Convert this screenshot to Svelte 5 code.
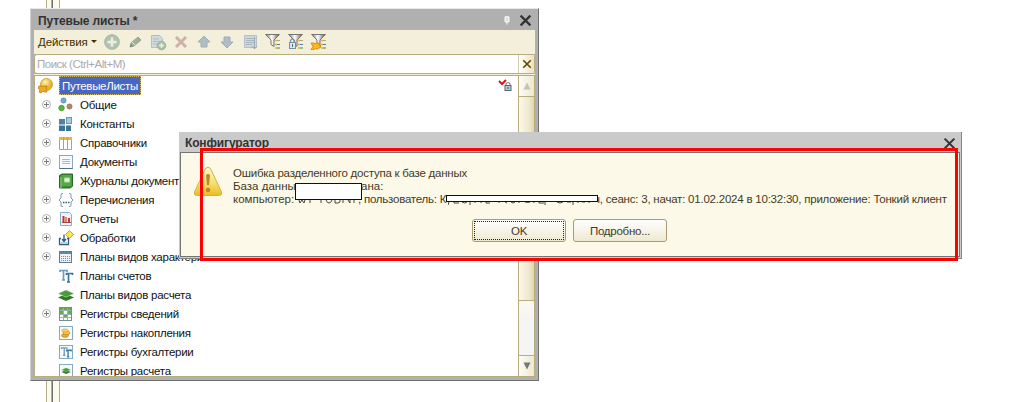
<script>
  const rows = [
    ['Общие', 'common', true],
    ['Константы', 'const', true],
    ['Справочники', 'catalog', true],
    ['Документы', 'doc', true],
    ['Журналы документов', 'journal', false],
    ['Перечисления', 'enum', true],
    ['Отчеты', 'report', true],
    ['Обработки', 'process', true],
    ['Планы видов характеристик', 'chars', true],
    ['Планы счетов', 'tt', false],
    ['Планы видов расчета', 'calc', false],
    ['Регистры сведений', 'info', true],
    ['Регистры накопления', 'accum', false],
    ['Регистры бухгалтерии', 'ttbox', false],
    ['Регистры расчета', 'calcbox', false]
  ];
</script>

{#snippet cross(color, size, w)}
  <svg width={size} height={size} viewBox="0 0 12 12"><path d="M1.5 1.5L10.5 10.5M10.5 1.5L1.5 10.5" stroke={color} stroke-width={w} fill="none" /></svg>
{/snippet}

{#snippet page()}
  <rect x="1.5" y="1.5" width="13" height="13" fill="#f7fafc" stroke="#86a9c4" />
{/snippet}

{#snippet letters()}
  <path d="M2 4V2.5H9V4M5.5 2.5V12M4 12H7" fill="none" stroke="#6a9dbc" stroke-width="1.7" />
  <path d="M8.500 7V5.500H14.500V7M10.500 5.500V14M9 14H12" fill="none" stroke="#3e7496" stroke-width="1.7" />
{/snippet}

{#snippet layers()}
  <path d="M0 10.500L8 7l8 3.500L8 14z" fill="#2e7827" />
  <path d="M0 6.500L8 3l8 3.500L8 10.200z" fill="#4f9b3c" stroke="#d7ecd0" stroke-width=".5" />
{/snippet}

{#snippet icon(kind)}
  <svg class="ico" width="16" height="16" viewBox="0 0 16 16">
    {#if kind === 'common'}
      <circle cx="5.500" cy="3.500" r="2.500" fill="#75a9d2" stroke="#5b93bb" />
      <circle cx="3.500" cy="11" r="2.700" fill="#55b83c" stroke="#46a234" />
      <circle cx="11.500" cy="9.500" r="2.500" fill="#b5886c" stroke="#a0755a" />
    {:else if kind === 'const'}
      <rect x="1" y="3" width="6" height="5.500" fill="#4f82a5" /><rect x="1" y="9.500" width="6" height="5.500" fill="#3d7396" /><rect x="8" y="9.500" width="5" height="5.500" fill="#3d7396" />
      <rect x="8.500" y="1.500" width="5" height="6" fill="#a9cae0" stroke="#6a9ab9" />
    {:else if kind === 'catalog'}
      <path d="M1.500 2.500h4v12h-4zM5.500 2.500h4v12h-4zM9.500 2.500h4v12h-4z" fill="#fff" stroke="#8ba8bd" />
      <path d="M1 2h4v3H1zM6 2h3v3H6zM10 2h4v3h-4z" fill="#e9b643" />
    {:else if kind === 'doc'}
      {@render page()}<path d="M4 5.500h8M4 7.500h8M4 9.500h8" stroke="#a4bbcc" /><path d="M1.500 14.500h13" stroke="#536f85" />
    {:else if kind === 'journal'}
      <path d="M1.500 2.500L4 1h10.500v12l-2 2H1.500z" fill="#3c8e34" stroke="#236a25" /><path d="M4 2h9.500v11H4z" fill="#56a846" /><path d="M6.500 5h5v4h-5z" fill="#dff0d7" stroke="#b1dba1" /><path d="M3 4v11" stroke="#a7d198" />
    {:else if kind === 'enum'}
      <path d="M5 1.500H4Q3 1.500 3 3v3L1 8l2 2v3q0 1.500 1 1.500h1M11 1.500H12q1 0 1 1.500v3l2 2-2 2v3q0 1.500-1 1.500h-1" stroke="#7b98ab" fill="none" /><path d="M5 10.500h1.500M7.500 10.500H9M10 10.500h1.500" stroke="#325c7a" stroke-width="1.500" />
    {:else if kind === 'report'}
      <path d="M2.500 1.500h9l2 2v11h-11z" fill="#eef5fa" stroke="#8aadc5" /><path d="M5.500 5v6M11 7v4" stroke="#d52a26" stroke-width="2" /><path d="M8 6v5" stroke="#df8772" stroke-width="2" /><path d="M4 11.500h9" stroke="#8b5147" />
    {:else if kind === 'process'}
      <path d="M11.500 .5l4 4-4 4-4-4z" fill="#ffe052" stroke="#d9a51c" /><path d="M3 8.500H1.500v6h9v-6H9M6 4.500v7M4 9l2 2.500L8 9" fill="none" stroke="#315d80" stroke-width="1.300" /><path d="M3 12.500h6" stroke="#a9cbe2" fill="none" />
    {:else if kind === 'chars'}
      <rect x="1.500" y="2.500" width="12" height="11" fill="#edf3f8" stroke="#567d99" /><path d="M2 4h11" stroke="#5e89a8" stroke-width="2" /><path d="M3 7.500h9M3 9.500h9M3 11.500h9" stroke="#7791a6" stroke-dasharray="1 1" />
    {:else if kind === 'tt'}
      {@render letters()}
    {:else if kind === 'calc'}
      {@render layers()}
    {:else if kind === 'info'}
      <rect x="1.500" y="1.500" width="12" height="13" fill="#fff" stroke="#71908c" /><path d="M2 2h11v2.500H2zM2 5h3v3H2zM10 5h3v3h-3zM6 9h3v3H6z" fill="#62ad4c" /><path d="M5.500 2v12M9.500 2v12M2 4.500h11M2 8.500h11M2 11.500h11" stroke="#9ab2b0" />
    {:else if kind === 'accum'}
      {@render page()}<ellipse cx="7" cy="10.500" rx="3.500" ry="1.800" fill="#eca928" stroke="#c17e10" stroke-width=".7" /><ellipse cx="8.500" cy="8" rx="3.500" ry="1.700" fill="#f7ca50" stroke="#c17e10" stroke-width=".7" /><ellipse cx="7" cy="5.500" rx="3.300" ry="1.500" fill="#ffd869" stroke="#d4951c" stroke-width=".7" />
    {:else if kind === 'ttbox'}
      {@render page()}<g transform="translate(2 2) scale(.77)">{@render letters()}</g>
    {:else}
      {@render page()}<g transform="translate(3.500 3) scale(.58)">{@render layers()}</g>
    {/if}
  </svg>
{/snippet}

{#snippet filter(kind)}
  <svg width="18" height="18" viewBox="0 0 18 18">
    <defs><linearGradient id="metal"><stop stop-color="#777" /><stop offset=".45" stop-color="#fff" /><stop offset="1" stop-color="#555" /></linearGradient></defs>
    <path d="M1.500 1.500h14L10 7v6.500L7 11.500V7z" fill="url(#metal)" stroke="#77776f" />
    <path d="M11 7.500h2M11 11.500h2M11 15h2" stroke="#e5ad39" stroke-width="1.300" /><path d="M13 7.500h3" stroke="#b4a681" /><path d="M13 11.500h3" stroke="#3986b8" /><path d="M13 15h3" stroke="#43902c" />
    {#if kind === 'lock'}<path d="M3.500 10V7.500q2-3 4 0V10" stroke="#7894a9" fill="none" stroke-width="1.300" /><rect x="2.500" y="9.500" width="6" height="6" fill="#d7e8f3" stroke="#7890a0" /><path d="M5.500 11v3" stroke="#577186" />{/if}
    {#if kind === 'star'}<path d="M1 10h3l1 1 1-1h3v2l2 1-1 2H8l-1 1.500-1-1.500-2 1.500H1l2-3z" fill="#ffb914" stroke="#cd8405" stroke-width=".8" />{/if}
  </svg>
{/snippet}

<main>
  <div class="splitter"></div>

  <section class="window tree-window">
    <header><b>Путевые листы *</b><span class="pin"><svg width="6" height="9" viewBox="0 0 6 9"><path d="M1 .8h4v5H1z" fill="#ddd" stroke="#fff" /><path d="M3 6v2.500" stroke="#fff" /></svg></span>{@render cross('#333', 13, 2)}</header>
    <div class="toolbar">
      <span class="actions">Действия</span><i class="drop"></i>
      <div class="tools">
        <svg width="18" height="18" viewBox="0 0 18 18"><circle cx="9" cy="9" r="7.300" fill="#b3c2b0" stroke="#a2b5a4" /><path d="M9 4.500v9M4.500 9h9" stroke="#edf0e0" stroke-width="2.500" /></svg>
        <svg width="18" height="18" viewBox="0 0 18 18"><path d="M4 14l1-4 7-6 3 3-7 6z" fill="#9fb19c" stroke="#91a795" /><path d="M6 9l3 3" stroke="#e3e8d6" /><path d="M4 14l1-3 2 2z" fill="#788c7c" /></svg>
        <svg width="18" height="18" viewBox="0 0 18 18"><path d="M2.500 2.500h8l3 3v9h-11z" fill="#d1dadb" stroke="#aebfc8" /><path d="M4 6h6M4 8.500h6M4 11h5" stroke="#aebec8" /><circle cx="12.500" cy="12.500" r="4.300" fill="#a8bda5" stroke="#9eb49d" /><path d="M12.500 10v5M10 12.500h5" stroke="#edf0e0" stroke-width="1.500" /></svg>
        <svg width="18" height="18" viewBox="0 0 18 18"><path d="M4 4l10 10M14 4L4 14" stroke="#cbb1aa" stroke-width="3" /></svg>
        <svg width="18" height="18" viewBox="0 0 18 18"><path d="M9 3l6 6h-3v5H6V9H3z" fill="#afbec4" stroke="#9caeb8" /></svg>
        <svg width="18" height="18" viewBox="0 0 18 18"><path d="M9 15L3 9h3V4h6v5h3z" fill="#afbec4" stroke="#9caeb8" /></svg>
        <svg width="18" height="18" viewBox="0 0 18 18"><path d="M3.500 2.500h12v12h-12z" fill="#ced7db" stroke="#b3c0c8" /><path d="M5 5.500h8M5 7.500h8M5 9.500h8M5 11.500h6" stroke="#a8b6bf" /><path d="M13.500 4v12M11 13l2.500 3 2.500-3" fill="none" stroke="#98a9b4" /></svg>
        {@render filter('plain')}
        {@render filter('lock')}
        {@render filter('star')}
      </div>
    </div>
    <div class="search"><span>Поиск (Ctrl+Alt+M)</span><button>{@render cross('#665000', 10, 2.100)}</button></div>
    <div class="tree">
      <div class="list">
        <div class="row root">
          <svg width="16" height="16" viewBox="0 0 16 16"><defs><radialGradient id="gold" cx=".4" cy=".3"><stop stop-color="#fff5b3" /><stop offset="1" stop-color="#e4b42d" /></radialGradient></defs><circle cx="8.500" cy="6.500" r="6" fill="url(#gold)" stroke="#d3a535" /><path d="M1 8h3l1 1 1-1h3l-1 3 1 3H6l-1-1-2 2-2-1 1-2-2-2z" fill="#efaa20" stroke="#b97813" stroke-width=".7" /></svg>
          <span class="selected">ПутевыеЛисты</span>
          <svg class="locked" width="14" height="13" viewBox="0 0 14 13"><path d="M1 2l3 3 4-4" fill="none" stroke="#d31915" stroke-width="2" /><path d="M8 7V4.500q2-2 4 0V7" fill="none" stroke="#66798a" /><rect x="7" y="6.500" width="6" height="5" fill="#bdcbd6" stroke="#526575" /><path d="M9 9h2" stroke="#405261" /></svg>
        </div>
        {#each rows as [name, kind, expands]}
          <div class="row">
            <span class="exp">{#if expands}<svg width="9" height="9" viewBox="0 0 9 9"><circle cx="4.500" cy="4.500" r="4" fill="#fff" stroke="#b0b0b0" /><path d="M2 4.500h5M4.500 2v5" stroke="#777" /></svg>{/if}</span>
            {@render icon(kind)}
            <span class="name">{name}</span>
          </div>
        {/each}
      </div>
      <div class="scroll">
        <div class="sb"><svg width="8" height="8" viewBox="0 0 8 8"><path d="M4 .5L7.500 7.500H.5z" fill="#c2c1ba" /></svg></div>
        <div class="thumb"></div>
        <div class="track"></div>
        <div class="sb down"><svg width="8" height="8" viewBox="0 0 8 8"><path d="M.5.500h7L4 7.500z" fill="#777" /></svg></div>
      </div>
    </div>
  </section>

  <section class="window dialog">
    <header><b>Конфигуратор</b>{@render cross('#333', 13, 1.900)}</header>
    <div class="body">
      <div class="content">
        <svg class="warn" width="30" height="31" viewBox="0 0 30 31">
          <defs><linearGradient id="warning" x2="0" y2="1"><stop stop-color="#fff9c8" /><stop offset=".55" stop-color="#f8df70" /><stop offset="1" stop-color="#e9bc22" /></linearGradient></defs>
          <path d="M12.500 2.500Q15 0 17.500 2.500L28.500 26q1 3-2 3.500h-23q-3-.5-2-3.500z" fill="url(#warning)" stroke="#d2b248" /><path d="M13 9q2-2 4 0l-1 10h-2z" fill="#b98829" /><circle cx="15" cy="24" r="2.200" fill="#b98829" />
        </svg>
        <div class="message">
          <p><span class="lead">Ошибка разделенного доступа к базе данных</span></p>
          <p><span class="database">База данных</span><span>ана:</span></p>
          <p>
            <span class="computer">компьютер:</span><svg width="60" height="13" viewBox="0 0 60 13"><path d="M1 7l1 3 2-3 2 3 1-3M12 7v3M23 7v3M28 7q1 3 3 3t3-3M37 7v3h3l2-1V7M45 7v3M50 7l2 3V7M56 7v3" fill="none" stroke="#51452e" /></svg><span class="user">, пользователь: К</span><svg width="146" height="13" viewBox="0 0 146 13"><path d="M1 9l-1 3M6 9v1h5M14 9q3 2 5 0M22 9v3M27 9v1M33 9v1M38 9v1h4M51 9v1M57 9l2 1M63 9q2 2 4 0M71 9v1M77 9q3 1 5 0M86 9v1M91 9v1h5M97 9v3M109 9q3 2 6 0M119 9h4M125 9v3M130 9v1M134 9h3M141 9v1" fill="none" stroke="#51452e" /></svg><span class="tail">ч, сеанс: 3, начат: 01.02.2024 в 10:32:30, приложение: Тонкий клиент</span>
          </p>
        </div>
      </div>
      <div class="buttons"><button class="ok">OK</button><button>Подробно...</button></div>
    </div>
  </section>
  <div class="redaction first"></div>
  <div class="redaction second"></div>
  <div class="highlight"></div>
</main>

<style>
  :global(body) { background: #fff; overflow: hidden; }
  * { box-sizing: border-box; }
  main { position: relative; width: 1036px; height: 402px; overflow: hidden; font: 11.500px/14px "Liberation Sans", Arial, sans-serif; color: #111; }
  svg { display: block; flex: none; }
  button { padding: 0; border: 0; font: inherit; color: inherit; }
  .splitter { position: absolute; left: 46px; top: 0; width: 14px; height: 402px; border: 1px solid #b5ad88; border-width: 0 1px; background: linear-gradient(90deg, #fcfae9 0 4px, #b5ad88 4px 5px, #707070 5px 6px, #fcfae9 6px); }
  .window { position: absolute; display: flex; flex-direction: column; }
  .tree-window { left: 30px; top: 8px; width: 509px; height: 373px; padding: 0 3px 3px; background: #b0b0b0; border: 1px solid; border-color: #e6e6e6 #707070 #707070 #d2d2d2; }
  .tree-window header { height: 21px; display: flex; align-items: center; padding: 2px 3px 0 4px; color: #333; }
  header b { font-size: 12px; flex: 1; letter-spacing: -.14px; white-space: nowrap; }
  .pin { margin-right: 9px; }
  .toolbar { height: 24px; background: #f3efda; display: flex; align-items: center; padding-left: 4px; color: #443000; }
  .actions { width: 51px; letter-spacing: -.1px; white-space: nowrap; }
  .drop { border: 3px solid transparent; border-top-color: #443000; border-bottom: 0; margin: -2px 6px 0 2px; }
  .tools { display: flex; gap: 5px; }
  .search { height: 20px; flex: none; border: 1px solid #b9ad7e; border-radius: 3px; background: #fff; display: flex; }
  .search span { flex: 1; padding: 2px 2px; color: #aaa; letter-spacing: -.5px; }
  .search button { width: 16px; border-left: 1px solid #d5ccad; background: linear-gradient(90deg, #fff, #eae3c4); display: grid; place-items: center; }
  .tree { margin-top: 1px; flex: 1; min-height: 0; border: 1px solid #b9ad7e; background: #fff; display: flex; box-shadow: 0 -1px #f3efda; }
  .list { flex: 1; overflow: hidden; }
  .row { height: 19px; display: flex; align-items: center; padding-left: 7px; }
  .root { padding-left: 3px; }
  .selected { margin-left: 5px; height: 19px; width: 82px; padding: 2px 1px 0 2px; border: 1px dotted #d2bc63; background: #4966c2; color: #fff; letter-spacing: -.3px; line-height: 14px; }
  .locked { margin-left: auto; margin-right: 6px; }
  .exp { width: 9px; margin-right: 7px; }
  .ico { margin-right: 6px; }
  .name { letter-spacing: -.26px; white-space: nowrap; }
  .scroll { width: 16px; border-left: 1px solid #b9ad7e; display: flex; flex-direction: column; }
  .sb { height: 21px; display: grid; place-items: center; background: linear-gradient(90deg, #fdfcf5, #eee8cd); border-bottom: 1px solid #b9ad7e; }
  .thumb { height: 204px; background: linear-gradient(90deg, #fbf9ed, #ede7c9 70%, #dfd5ae); border-bottom: 1px solid #b9ad7e; }
  .track { flex: 1; background: linear-gradient(#faf9f1, #f5f5f5 30%); }
  .down { border-top: 1px solid #b9ad7e; border-bottom: 0; }
  .dialog { left: 179px; top: 132px; width: 783px; height: 127px; background: #cacaca; padding: 0 1px 1px 1px; border-right: 1px solid #858585; border-bottom: 1px solid #858585; color: #453922; }
  .dialog header { height: 20px; display: flex; align-items: center; padding: 2px 4px 0 5px; color: #333; }
  .body { flex: 1; border: 1px solid #747474; background: #fcf9e9; padding: 14px 12px 0; display: flex; flex-direction: column; }
  .content { height: 52px; display: flex; gap: 10px; }
  .warn { margin-top: -1px; }
  .message { white-space: nowrap; }
  p { margin: 0; height: 13px; line-height: 13px; display: flex; }
  .lead { letter-spacing: -.23px; }
  .database { width: 128px; letter-spacing: 0; }
  .computer { width: 65px; letter-spacing: 0; }
  .user { width: 90px; letter-spacing: -.23px; }
  .tail { letter-spacing: -.22px; }
  .buttons { display: flex; gap: 7px; padding-left: 279px; }
  .buttons button { width: 94px; height: 23px; border: 1px solid #a99c70; border-radius: 3px; background: linear-gradient(#fff, #eee9d0); position: relative; letter-spacing: -.25px; }
  .buttons .ok::after { content: ""; position: absolute; inset: 1px; border: 1px dotted #222; }
  .redaction { position: absolute; background: #fff; border: 1px solid #111; }
  .first { left: 295px; top: 183px; width: 67px; height: 17px; }
  .second { left: 446px; top: 195px; width: 152px; height: 7px; }
  .highlight { position: absolute; left: 200px; top: 148px; width: 758px; height: 113px; border: 3px solid #f00; }
</style>
